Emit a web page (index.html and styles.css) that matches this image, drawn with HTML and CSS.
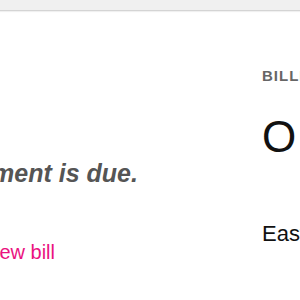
FILE: index.html
```html
<!DOCTYPE html>
<html>
<head>
  <title>Billing</title>
  <link rel="stylesheet" href="styles.css">
</head>
<body>
  <div class="toolbar"></div>

  <div class="page">
    <div class="summary">
      <p class="due">Your payment is due.</p>
      <a class="view-bill" href="#">View bill</a>
    </div>

    <div class="details">
      <h2 class="label">Billing</h2>
      <div class="status">OK</div>
      <div class="plan">Easy Pay</div>
    </div>
  </div>
</body>
</html>
```

FILE: styles.css
```css
* {
  margin: 0;
  padding: 0;
  box-sizing: border-box;
}

body {
  font-family: 'Liberation Sans', Arial, sans-serif;
  background-color: #fff;
  color: #111;
  width: 300px;
  height: 300px;
  overflow: hidden;
}

.toolbar {
  height: 11px;
  background-color: #f0f0f0;
  border-bottom: 1px solid #d4d4d4;
  box-shadow: 0 1px 1px rgba(0, 0, 0, 0.06);
}

.page {
  display: flex;
  width: 600px;
}

/* left column, scrolled partly out of view */
.summary {
  width: 262px;
  flex-shrink: 0;
  padding-top: 148px;
}

.due {
  font-size: 25px;
  font-weight: bold;
  font-style: italic;
  color: #555;
  margin-left: -114px;
  white-space: nowrap;
}

.view-bill {
  display: inline-block;
  margin-top: 53px;
  margin-left: -18px;
  font-size: 20px;
  color: #ea1380;
  text-decoration: none;
}

.details {
  padding-top: 56px;
  white-space: nowrap;
}

.label {
  font-size: 15px;
  font-weight: bold;
  text-transform: uppercase;
  letter-spacing: 1px;
  color: #666;
}

.status {
  font-size: 44px;
  letter-spacing: 4px;
  margin-top: 28px;
}

.plan {
  font-size: 22px;
  margin-top: 59px;
}
```
